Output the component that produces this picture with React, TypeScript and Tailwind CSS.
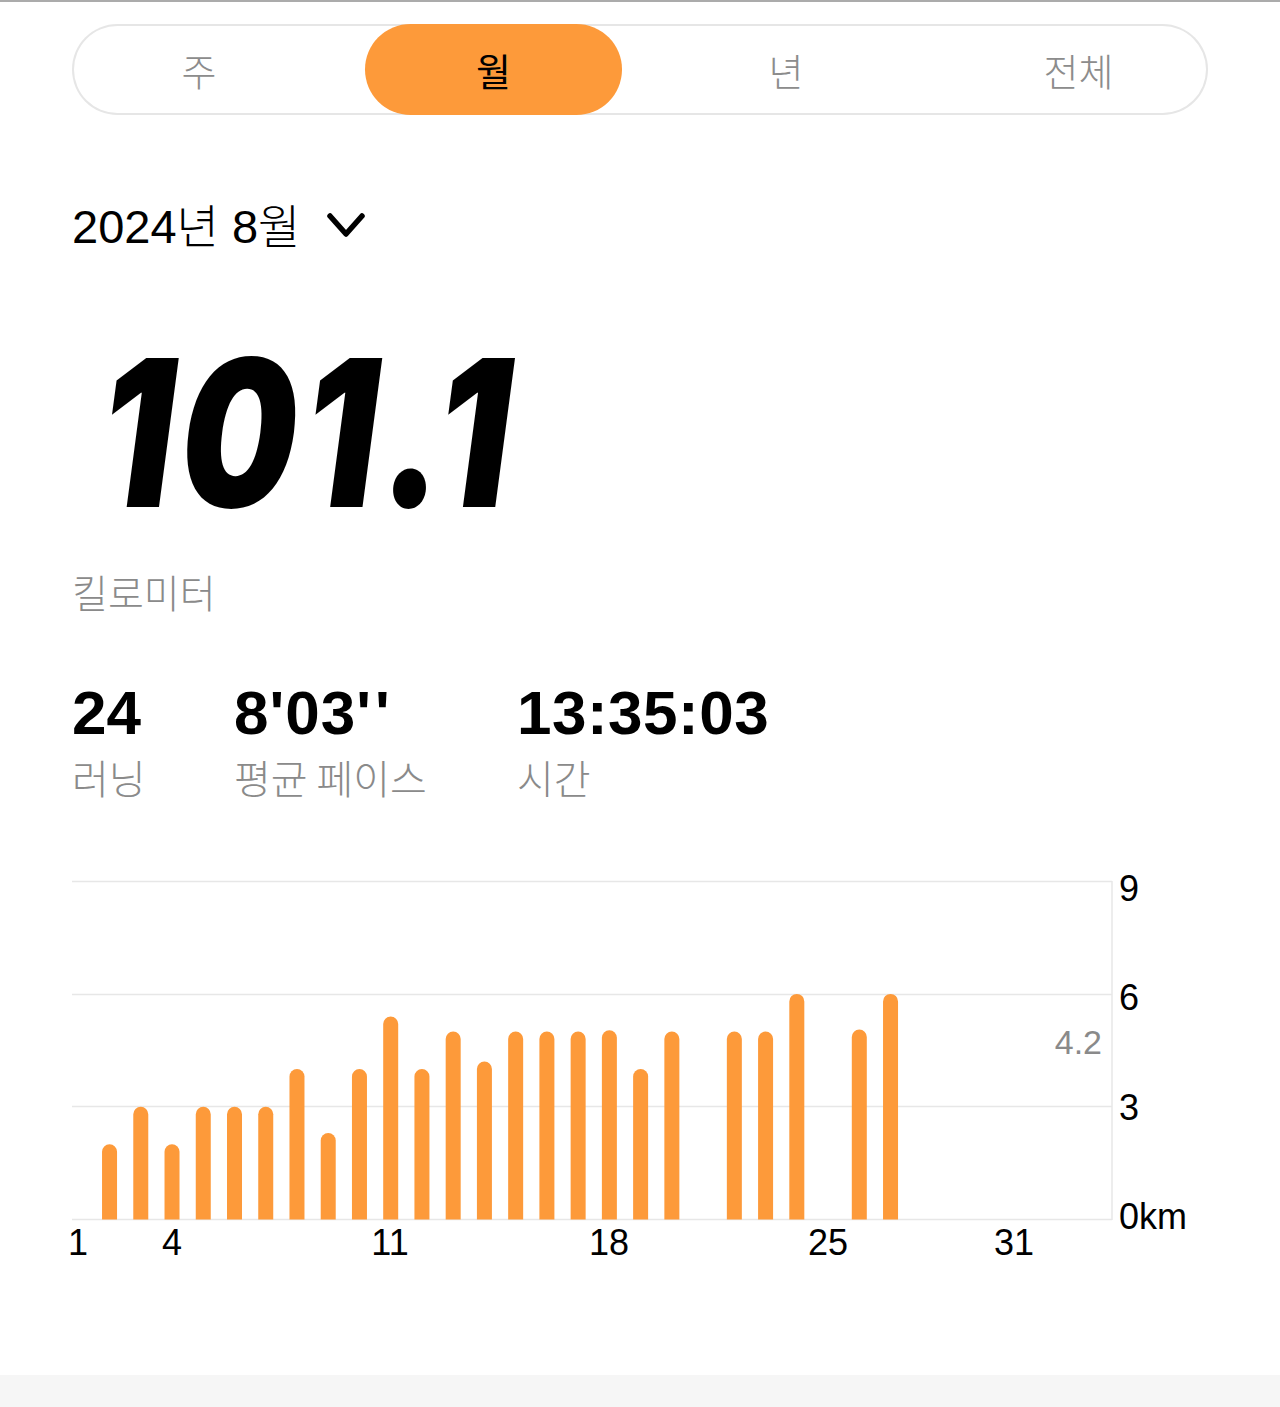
import React from "react";

const days: [number, number][] = [
  [2, 2.0], [3, 3.0], [4, 2.0], [5, 3.0], [6, 3.0], [7, 3.0], [8, 4.0], [9, 2.3],
  [10, 4.0], [11, 5.4], [12, 4.0], [13, 5.0], [14, 4.2], [15, 5.0], [16, 5.0],
  [17, 5.0], [18, 5.03], [19, 4.0], [20, 5.0], [22, 5.0], [23, 5.0], [24, 6.0],
  [26, 5.05], [27, 6.0],
];

const cx = (d: number) => 78.3 + (d - 1) * 31.24;
const BASE = 1219.5;
const PER = 37.6;

function Bar({ d, v }: { d: number; v: number }) {
  const w = 15;
  const r = 7.5;
  const x = cx(d) - w / 2;
  const top = BASE - v * PER;
  const path = `M${x} ${BASE} L${x} ${top + r} A${r} ${r} 0 0 1 ${x + w} ${top + r} L${x + w} ${BASE} Z`;
  return <path d={path} fill="#fd9a3a" />;
}

function Chart() {
  const font = "'Liberation Sans', Arial, sans-serif";
  return (
    <svg width="1280" height="410" viewBox="0 860 1280 410" className="block">
      {[881.5, 994.5, 1106.5, 1219.5].map((y) => (
        <line key={y} x1="72" x2="1112" y1={y} y2={y} stroke="#e7e7e7" strokeWidth="1.5" />
      ))}
      <line x1="1112" x2="1112" y1="881" y2="1220" stroke="#e7e7e7" strokeWidth="1.5" />
      {days.map(([d, v]) => (
        <Bar key={d} d={d} v={v} />
      ))}
      <g fontFamily={font} fontSize="36" fill="#000">
        <text x="1119" y="901">9</text>
        <text x="1119" y="1010">6</text>
        <text x="1119" y="1120">3</text>
        <text x="1119" y="1229">0km</text>
      </g>
      <text x="1102" y="1054" fontFamily={font} fontSize="34" fill="#8a8a8a" textAnchor="end">
        4.2
      </text>
      <g fontFamily={font} fontSize="36" fill="#000" textAnchor="middle">
        <text x="78" y="1255">1</text>
        <text x="172" y="1255">4</text>
        <text x="390" y="1255">11</text>
        <text x="609" y="1255">18</text>
        <text x="828" y="1255">25</text>
        <text x="1014" y="1255">31</text>
      </g>
    </svg>
  );
}

export default function App() {
  return (
    <div className="w-[1280px] h-[1407px] bg-white flex flex-col font-['Liberation_Sans','Noto_Sans_CJK_KR',sans-serif] text-black overflow-hidden">
      <div className="h-[2px] bg-[#ababab]" />
      {/* segmented tabs */}
      <div className="mt-[22px] mx-[72px] h-[91px] rounded-full shadow-[inset_0_0_0_2px_#e6e6e6] flex items-stretch font-['Noto_Sans_CJK_KR',sans-serif] text-[38px] font-light">
        <div className="w-[254px] flex items-center justify-center text-[#8c8c8c]">주</div>
        <div className="ml-[39px] w-[257px] rounded-full bg-[#fd9a3a] flex items-center justify-center text-black font-normal">월</div>
        <div className="w-[328px] flex items-center justify-center text-[#8c8c8c]">년</div>
        <div className="w-[257px] flex items-center justify-center text-[#8c8c8c]">전체</div>
      </div>
      {/* date */}
      <div className="mt-[80px] h-[60px] px-[72px] flex items-center">
        <span className="text-[47px] leading-none">
          2024<span className="font-['Noto_Sans_CJK_KR',sans-serif] font-light text-[46px]">년</span> 8<span className="font-['Noto_Sans_CJK_KR',sans-serif] font-light text-[46px]">월</span>
        </span>
        <svg width="38" height="30" viewBox="0 0 38 30" className="ml-[27px]">
          <path d="M3 6 L19 24 L35 6" fill="none" stroke="#000" strokeWidth="5.5" strokeLinecap="round" strokeLinejoin="round" />
        </svg>
      </div>
      {/* big number */}
      <div className="mt-[75px] h-[205px] pl-[100px] overflow-visible">
        <span className="inline-block origin-left scale-x-[0.8] font-['Inter',sans-serif] font-black italic text-[205px] leading-none tracking-[8px]">
          101.1
        </span>
      </div>
      <div className="mt-[36px] px-[72px] text-[39px] leading-[40px] text-[#8a8a8a] font-['Noto_Sans_CJK_KR',sans-serif] font-light">
        킬로미터
      </div>
      {/* stats */}
      <div className="mt-[71px] px-[72px] flex">
        <div className="w-[162px] flex flex-col">
          <span className="text-[62px] leading-none font-bold">24</span>
          <span className="mt-[13px] text-[40px] leading-[40px] text-[#8a8a8a] font-['Noto_Sans_CJK_KR',sans-serif] font-light">러닝</span>
        </div>
        <div className="w-[283px] flex flex-col">
          <span className="text-[62px] leading-none font-bold tracking-[1px]">8'03'<span className="ml-[3px]">'</span></span>
          <span className="mt-[13px] text-[40px] leading-[40px] text-[#8a8a8a] font-['Noto_Sans_CJK_KR',sans-serif] font-light">평균 페이스</span>
        </div>
        <div className="flex flex-col">
          <span className="text-[62px] leading-none font-bold tracking-[0.5px]">13:35:03</span>
          <span className="mt-[13px] text-[40px] leading-[40px] text-[#8a8a8a] font-['Noto_Sans_CJK_KR',sans-serif] font-light">시간</span>
        </div>
      </div>
      <div className="mt-[63px]">
        <Chart />
      </div>
      <div className="mt-auto h-[32px] bg-[#f6f6f6]" />
    </div>
  );
}
